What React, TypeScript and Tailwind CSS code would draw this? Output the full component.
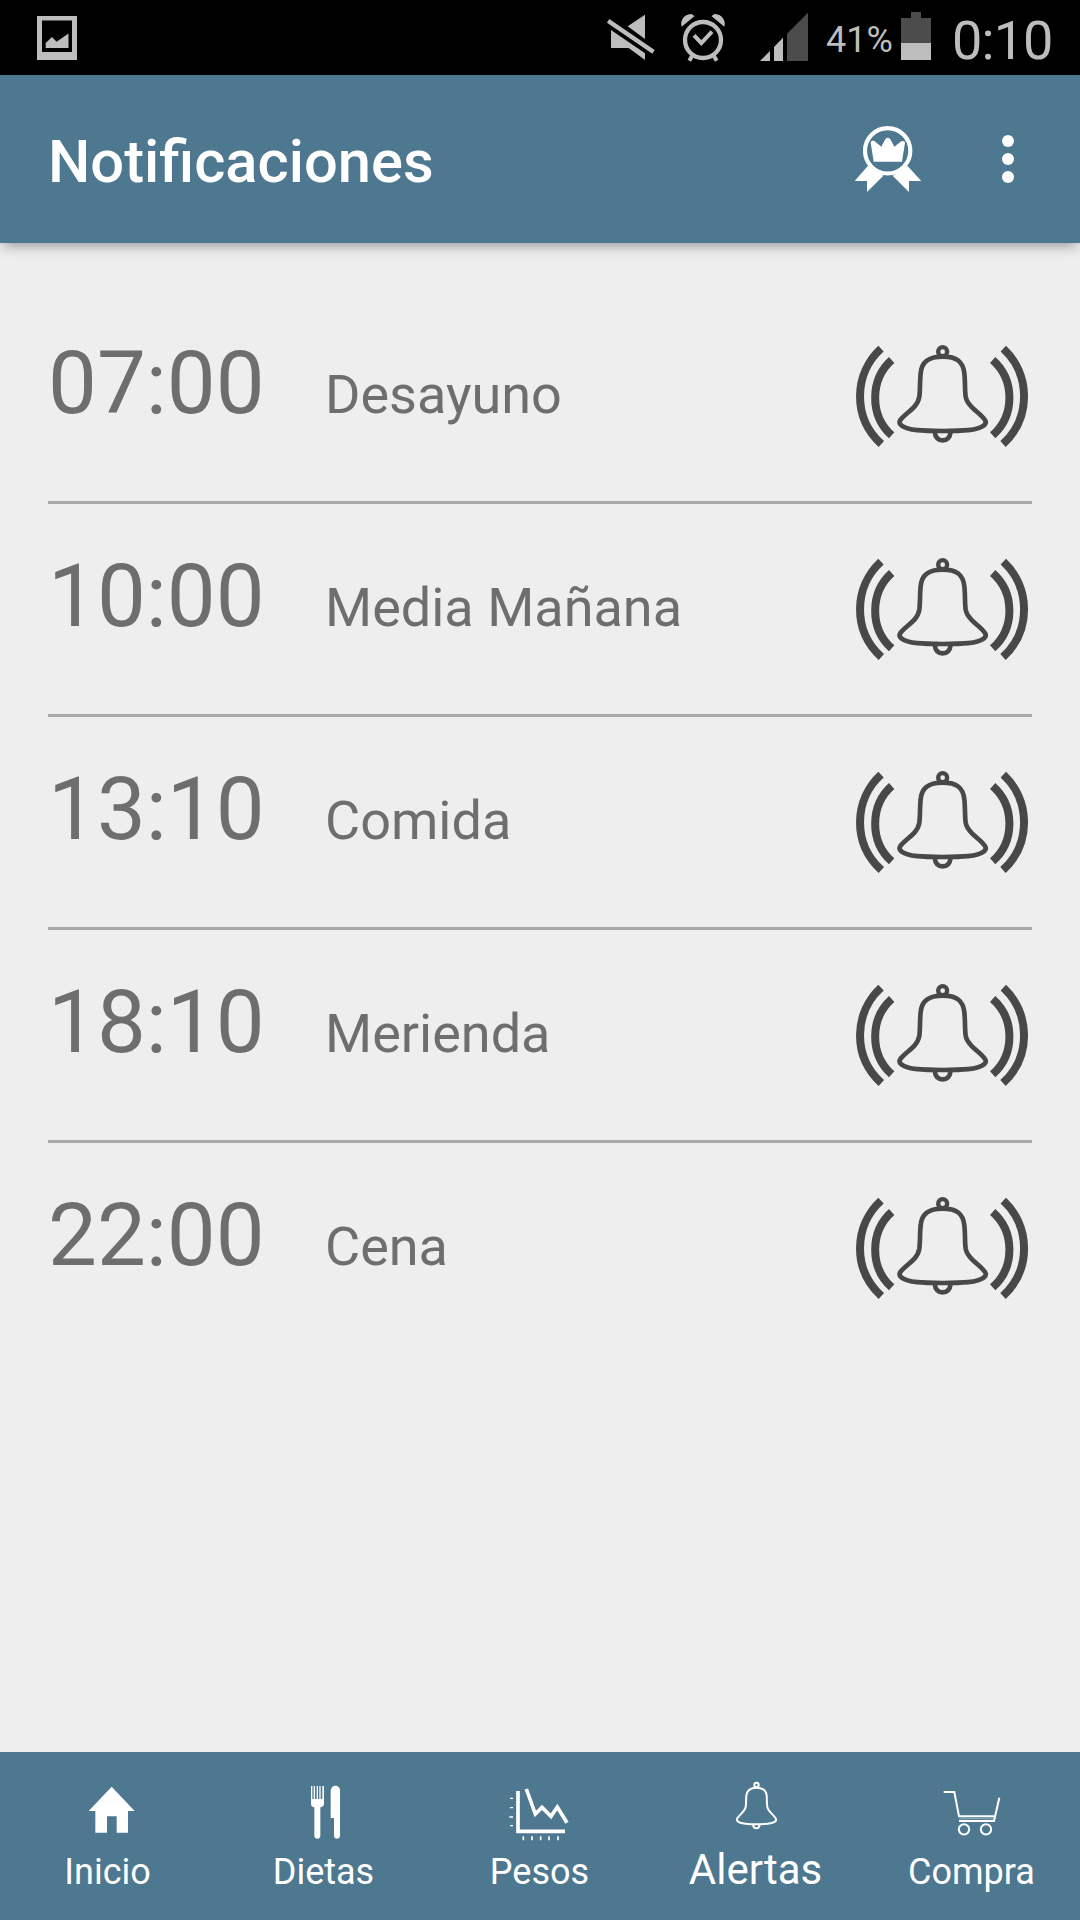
import React from 'react';

interface Alarm {
     time: string;
     label: string;
}

interface NavItem {
     label: string;
     icon: React.ReactNode;
     active?: boolean;
}

const alarms: Alarm[] = [
     { time: '07:00', label: 'Desayuno' },
     { time: '10:00', label: 'Media Mañana' },
     { time: '13:10', label: 'Comida' },
     { time: '18:10', label: 'Merienda' },
     { time: '22:00', label: 'Cena' },
];

const PhotoIcon = () => (
     <svg className="ml-9 h-[75px] w-[42px]" viewBox="36 0 42 75" fill="#bdbdbd">
          <path fillRule="evenodd" d="M37 16h40v44H37zM42 20.5v31.5h30V20.5z" />
          <path d="M45.700 48v-5l6.300-6 4.600 4.800 11.900-8.300V48z" />
     </svg>
);

const MuteIcon = () => (
     <svg className="h-[75px] w-[51px]" viewBox="48 0 153 225" fill="#bdbdbd">
          <path d="M165 44v73l-52-38z" />
          <path d="M63 90l102 70v20l-49-36H63z" />
          <path d="M58 57l136 93-7 11L51 68z" />
     </svg>
);

const AlarmIcon = () => (
     <svg className="h-[75px] w-[51px]" viewBox="264 0 153 225" fill="none" stroke="#bdbdbd">
          <circle cx="339" cy="120" r="54" strokeWidth="13" />
          <path d="M312 106l22 23 32-34" strokeWidth="12" />
          <path d="M306 168l-8 14M372 168l8 14" strokeWidth="12" />
          <path d="M275 80c-6-18 8-37 27-38 5 0 9 3 11 7zM403 80c6-18-8-37-27-38-5 0-9 3-11 7z" fill="#bdbdbd" stroke="none" />
     </svg>
);

const SignalIcon = () => (
     <svg className="h-[75px] w-[51px]" viewBox="507 0 153 225" fill="#bdbdbd">
          <path d="M510 183l30-30v30zM552 183v-42l27-28v70z" />
          <path d="M591 183v-82l63-63v145z" fill="#4c4c4c" />
     </svg>
);

const BatteryIcon = () => (
     <svg className="h-[75px] w-[33px]" viewBox="240 0 99 225">
          <path d="M243 129V54h30V36h30v18h30v75z" fill="#4c4c4c" />
          <path d="M243 129h90v51h-90z" fill="#bdbdbd" />
     </svg>
);

const AwardIcon = () => (
     <svg className="h-[168px] w-[68px]" viewBox="72 -75 204 504" fill="#fff">
          <circle cx="173" cy="152.500" r="68" fill="none" stroke="#fff" strokeWidth="12.500" />
          <path d="M131 185l-9-57c0-5 8-7 12-4l20 16 11-21c4-8 13-8 17 0l11 21 21-16c5-3 11 0 11 4l-9 57z" />
          <path d="M114 197l-40 46h37v33l49-49zM232 197l42 46h-37v33l-49-49z" />
     </svg>
);

const MoreIcon = () => (
     <svg className="h-[168px] w-6" viewBox="498 -75 72 504" fill="#fff">
          <circle cx="534" cy="123" r="18" />
          <circle cx="534" cy="177" r="18" />
          <circle cx="534" cy="231" r="18" />
     </svg>
);

const RingingBell = () => (
     <svg className="mt-[54px] mr-1 h-[102px] w-[172px] overflow-visible" viewBox="48 45 516 306" fill="none" stroke="#484848">
          <path d="M123 56C42 130 36 262 124 342M155 90C90 148 88 256 155 316" strokeWidth="24" />
          <path d="M490 56c80 74 86 206-1 286M458 90c66 58 68 166 0 226" strokeWidth="24" />
          <circle cx="308" cy="65" r="13.500" strokeWidth="13" />
          <path
               d="M308 80c-42 0-63 14-66 50-3 26-1 47-4 70-2 13-6 20-14 29-13 15-31 25-43 41-4 6-2 12 3 16 20 16 66 17 124 17s104-1 124-17c5-4 7-10 3-16-10-15-26-25-39-38-10-10-17-20-19-32-3-21-1-44-4-70-4-36-23-50-65-50z"
               strokeWidth="14"
          />
          <path d="M284 306c2 15 9 25 24 25s22-10 24-25" strokeWidth="14" />
     </svg>
);

const HomeIcon = () => (
     <svg className="size-[72px]" viewBox="216 108 216 216" fill="#fff">
          <path d="M335 140l69 73h-20v65h-34v-49h-29v49h-35v-65h-20z" />
     </svg>
);

const DietIcon = () => (
     <svg className="size-[72px]" viewBox="864 108 216 216" fill="#fff">
          <path d="M933 138h4v39h4v-39h4v39h5v-39h4v39h4v-39h4v39h5v-39h5v53c0 7-5 9-11 11v85c0 12-18 12-18 0v-85c-6-2-10-4-10-11z" />
          <path d="M1020 151v136c0 12-18 12-18 0v-53h-10v-80c0-22 28-22 28-3z" />
     </svg>
);

const WeightIcon = () => (
     <svg className="size-[72px]" viewBox="192 108 216 216" fill="none" stroke="#fff">
          <path d="M234 153v121h141" strokeWidth="11" />
          <path d="M259 147l27 75 20-20 27 27 19-28 29 47" strokeWidth="11" />
          <path d="M210 175h9M210 203h9M208 231h11M210 257h9" strokeWidth="4" />
          <path d="M250 289v12M276 289v12M302 289v12M327 289v12M354 289v12" strokeWidth="5" />
     </svg>
);

const BellIcon = () => (
     <svg className="size-[72px]" viewBox="840 108 216 216" fill="none" stroke="#fff" strokeWidth="6">
          <circle cx="949.500" cy="135" r="6.500" />
          <path d="M949 143c-18 0-28 7-30 24-1 13 0 22-2 34-2 13-18 22-25 34-7 13 18 18 57 18s66-5 58-18c-7-12-23-21-25-34-2-12-1-21-2-34-2-17-12-24-31-24z" />
          <path d="M939 254c1 7 4 11 10 11s9-4 10-11" />
     </svg>
);

const CartIcon = () => (
     <svg className="size-[72px]" viewBox="288 108 216 216" fill="none" stroke="#fff" strokeWidth="6">
          <path d="M311 156h32l14 73h105M478 173l-16 70H357" />
          <path d="M358 236h102" strokeWidth="2" strokeOpacity="0.6" />
          <circle cx="372" cy="268" r="15.500" />
          <circle cx="438" cy="268" r="15.500" />
     </svg>
);

const navItems: NavItem[] = [
     { label: 'Inicio', icon: <HomeIcon /> },
     { label: 'Dietas', icon: <DietIcon /> },
     { label: 'Pesos', icon: <WeightIcon /> },
     { label: 'Alertas', icon: <BellIcon />, active: true },
     { label: 'Compra', icon: <CartIcon /> },
];

const StatusBar = () => (
     <div className="flex h-[75px] shrink-0 items-start bg-black text-[#bdbdbd]">
          <PhotoIcon />
          <div className="ml-auto flex items-start pr-6">
               <MuteIcon />
               <div className="w-[21px]" />
               <AlarmIcon />
               <div className="w-[30px]" />
               <SignalIcon />
               <span className="mt-[19px] w-[90px] pl-4 text-[36px] leading-[42px]">41%</span>
               <BatteryIcon />
               <span className="mt-[9px] ml-[19px] w-[104px] text-[54px] leading-[63px] tracking-[-0.9px]">0:10</span>
          </div>
     </div>
);

const Header = () => (
     <header className="relative z-10 flex h-[168px] shrink-0 items-start bg-[#4e7790] pr-[60px] pl-12 text-white shadow-[0_6px_12px_-3px_rgba(0,0,0,0.35)]">
          <h1 className="mt-[52px] text-[59.7px] leading-[71px] font-medium">Notificaciones</h1>
          <div className="ml-auto flex gap-[74px]">
               <AwardIcon />
               <MoreIcon />
          </div>
     </header>
);

const AlarmRow: React.FC<Alarm> = ({ time, label }) => (
     <li className="flex h-[213px] items-start border-b-[3px] border-[#a9a9a9] last:border-b-0">
          <div className="mt-[41px] flex items-baseline text-[#6e6e6e]">
               <span className="w-[277px] text-[87px] leading-[102px]">{time}</span>
               <span className="text-[54px] leading-[63px]">{label}</span>
          </div>
          <div className="ml-auto">
               <RingingBell />
          </div>
     </li>
);

const BottomNav = () => (
     <nav className="grid h-[168px] shrink-0 grid-cols-5 bg-[#4e7790] pt-6 text-white">
          {navItems.map(({ label, icon, active }) => (
               <div key={label} className="flex flex-col items-center">
                    {icon}
                    <span className={active ? 'pr-px text-[42px] leading-[43px]' : 'mt-1.5 pr-px text-[36px] leading-[36px]'}>
                         {label}
                    </span>
               </div>
          ))}
     </nav>
);

const App: React.FC = () => {
     return (
          <div className="flex h-[1920px] w-[1080px] flex-col bg-[#eeeeee] font-['Roboto',sans-serif]">
               <StatusBar />
               <Header />
               <main className="flex-1 px-12 pt-12">
                    <ul>
                         {alarms.map((alarm) => (
                              <AlarmRow key={alarm.time} {...alarm} />
                         ))}
                    </ul>
               </main>
               <BottomNav />
          </div>
     );
};

export default App;
